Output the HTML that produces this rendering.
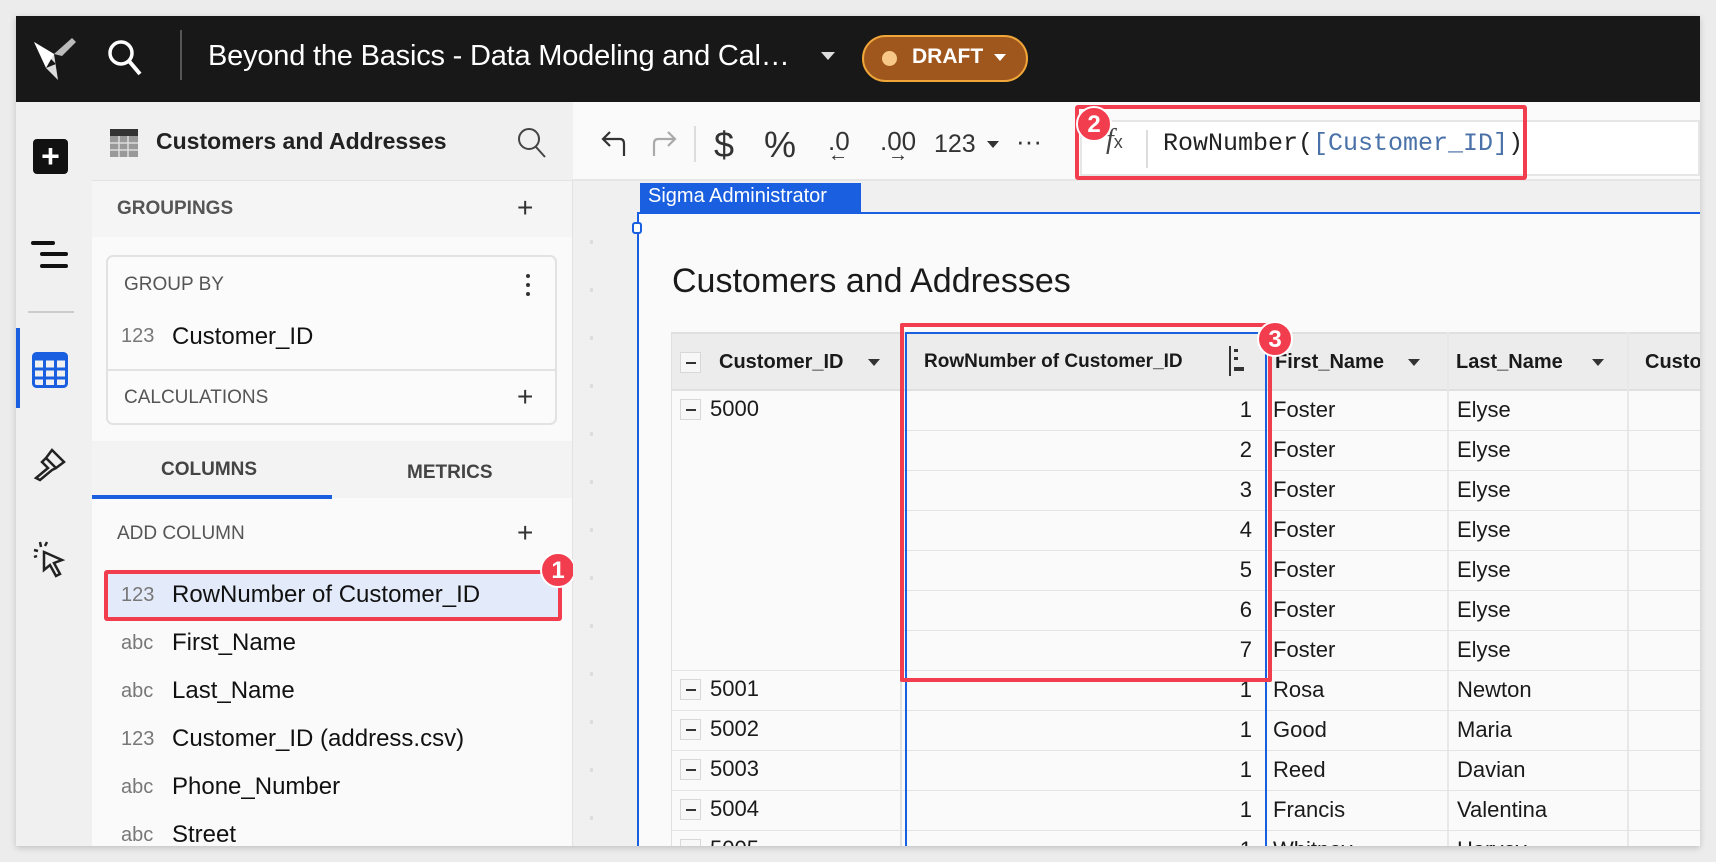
<!DOCTYPE html>
<html><head><meta charset="utf-8">
<style>
*{box-sizing:border-box;margin:0;padding:0}
body{width:1716px;height:862px;background:#ececec;font-family:"Liberation Sans",sans-serif;position:relative;overflow:hidden;color:#1a1a1a}
.a{position:absolute}
.frame{left:16px;top:16px;width:1684px;height:830px;background:#fafafa;box-shadow:0 2px 6px rgba(0,0,0,.18);overflow:hidden}
.top{left:0;top:0;width:1684px;height:86px;background:#181818}
.t{white-space:nowrap}
.cell{font-size:22px;color:#1a1a1a}
.hl{height:1px;background:#e4e4e4}
.badge{width:36px;height:36px;border-radius:50%;background:#f23d4f;color:#fff;font-weight:bold;font-size:24px;text-align:center;line-height:33px;border:2px solid #fff}
.mbox{width:21px;height:21px;border:1px solid #d8d8d8;background:#f7f7f7}
.mbox:after{content:"";position:absolute;left:5px;top:9px;width:10px;height:2px;background:#333}
</style></head><body>
<div class="a frame">
 <div class="a top">
  <svg class="a" style="left:16px;top:18px" width="46" height="48" viewBox="0 0 46 48"><path d="M2 8 L22 20 L26 46 L14 34 L24 30 Z" fill="#ddd"/><path d="M22 20 L40 4 L44 8 L30 22 Z" fill="#bbb"/><path d="M2 8 L22 20 L14 34Z" fill="#fff"/></svg>
  <svg class="a" style="left:90px;top:22px" width="38" height="40" viewBox="0 0 38 40"><circle cx="15" cy="15" r="11" fill="none" stroke="#fff" stroke-width="3.5"/><path d="M23 23 L34 36" stroke="#fff" stroke-width="4"/></svg>
  <div class="a" style="left:164px;top:14px;width:2px;height:50px;background:#555"></div>
  <div class="a t" style="left:192px;top:24px;font-size:29px;color:#fff;letter-spacing:-0.2px">Beyond the Basics - Data Modeling and Cal…</div>
  <div class="a" style="left:805px;top:36px;border-left:7px solid transparent;border-right:7px solid transparent;border-top:8px solid #ddd"></div>
  <div class="a" style="left:846px;top:19px;width:166px;height:47px;border-radius:24px;background:#a0571d;border:2px solid #f0a638"></div>
  <div class="a" style="left:866px;top:35px;width:15px;height:15px;border-radius:50%;background:#f7c887"></div>
  <div class="a t" style="left:896px;top:29px;font-size:21px;font-weight:bold;color:#fff">DRAFT</div>
  <div class="a" style="left:978px;top:38px;border-left:6px solid transparent;border-right:6px solid transparent;border-top:7px solid #fff"></div>
 </div>
 <!-- rail -->
 <div class="a" style="left:0;top:86px;width:76px;height:744px;background:#f0f0f0"></div>
 <div class="a" style="left:17px;top:123px;width:35px;height:35px;background:#111;border-radius:4px;color:#fff;font-size:32px;font-weight:bold;text-align:center;line-height:34px">+</div>
 <div class="a" style="left:15px;top:225px;width:24px;height:4px;background:#111;border-radius:2px"></div>
 <div class="a" style="left:24px;top:236px;width:28px;height:4px;background:#111;border-radius:2px"></div>
 <div class="a" style="left:24px;top:248px;width:28px;height:4px;background:#111;border-radius:2px"></div>
 <div class="a" style="left:12px;top:295px;width:46px;height:2px;background:#ccc"></div>
 <div class="a" style="left:0;top:312px;width:4px;height:80px;background:#1a5fe0"></div>
 <svg class="a" style="left:16px;top:336px" width="36" height="36" viewBox="0 0 36 36"><rect x="1.5" y="1.5" width="33" height="33" rx="3" fill="none" stroke="#1a5fe0" stroke-width="3"/><rect x="1.5" y="1.5" width="33" height="7" fill="#1a5fe0"/><path d="M1.5 17H34.5M1.5 26H34.5M12.5 8V34M23.5 8V34" stroke="#1a5fe0" stroke-width="3"/></svg>
 <svg class="a" style="left:16px;top:430px" width="36" height="36" viewBox="0 0 36 36" fill="none" stroke="#222" stroke-width="2.5"><path d="M20 4 L32 16 L24 22 L14 12 Z"/><path d="M14 12 L10 16 L16 22 L4 32 L8 34 L20 24 L24 22"/></svg>
 <svg class="a" style="left:16px;top:524px" width="38" height="40" viewBox="0 0 38 40" fill="none" stroke="#222" stroke-width="2.5"><path d="M12 12 L30 20 L22 23 L28 34 L24 36 L18 25 L12 30 Z"/><path d="M8 2 L9 7M2 10 L6 11M15 2 L13 6M2 17 L5 16"/></svg>
 <!-- panel -->
 <div class="a" style="left:76px;top:86px;width:481px;height:744px;background:#fafafa;border-right:1px solid #e2e2e2"></div>
 <div class="a" style="left:76px;top:86px;width:481px;height:79px;background:#f0f0f0;border-bottom:1px solid #e2e2e2"></div>
 <svg class="a" style="left:94px;top:113px" width="28" height="28" viewBox="0 0 28 28"><rect width="28" height="28" fill="#999"/><rect width="28" height="7" fill="#333"/><path d="M0 14H28M0 21H28M9 7V28M18 7V28" stroke="#ddd" stroke-width="1.5"/></svg>
 <div class="a t" style="left:140px;top:112px;font-size:23px;font-weight:bold;color:#222">Customers and Addresses</div>
 <svg class="a" style="left:500px;top:110px" width="32" height="34" viewBox="0 0 32 34" fill="none" stroke="#444" stroke-width="2"><circle cx="13" cy="13" r="10"/><path d="M20 21 L29 31"/></svg>
 <div class="a" style="left:76px;top:165px;width:480px;height:56px;background:#f5f5f5"></div>
 <div class="a t" style="left:101px;top:182px;font-size:19px;font-weight:bold;color:#555">GROUPINGS</div>
 <div class="a t" style="left:501px;top:176px;font-size:28px;color:#333">+</div>
 <div class="a" style="left:90px;top:239px;width:451px;height:170px;background:#fbfbfb;border:2px solid #e2e2e2;border-radius:7px"></div>
 <div class="a" style="left:92px;top:353px;width:447px;height:2px;background:#e2e2e2"></div>
 <div class="a t" style="left:108px;top:258px;font-size:19px;color:#555">GROUP BY</div>
 <div class="a" style="left:510px;top:258px;width:4px;height:4px;border-radius:2px;background:#333;box-shadow:0 9px 0 #333,0 18px 0 #333"></div>
 <div class="a t" style="left:105px;top:309px;font-size:20px;color:#777">123</div>
 <div class="a t" style="left:156px;top:307px;font-size:24px;color:#111">Customer_ID</div>
 <div class="a t" style="left:108px;top:371px;font-size:19px;color:#555">CALCULATIONS</div>
 <div class="a t" style="left:501px;top:365px;font-size:28px;color:#333">+</div>
 <div class="a" style="left:76px;top:425px;width:480px;height:57px;background:#f3f3f3"></div>
 <div class="a t" style="left:145px;top:443px;font-size:19px;font-weight:bold;color:#444">COLUMNS</div>
 <div class="a t" style="left:391px;top:446px;font-size:19px;font-weight:bold;color:#444">METRICS</div>
 <div class="a" style="left:76px;top:479px;width:240px;height:4px;background:#1a5fe0"></div>
 <div class="a t" style="left:101px;top:507px;font-size:19px;color:#555">ADD COLUMN</div>
 <div class="a t" style="left:501px;top:501px;font-size:28px;color:#333">+</div>
 <div class="a" style="left:88px;top:554px;width:458px;height:51px;background:#e3ebfb;border:4px solid #f23d4f;border-radius:3px"></div>
 <div class="a badge" style="left:524px;top:536px">1</div>
 <div class="a t" style="left:105px;top:568px;font-size:20px;color:#777">123</div>
 <div class="a t" style="left:156px;top:565px;font-size:24px;color:#111">RowNumber of Customer_ID</div>
 <div class="a t" style="left:105px;top:616px;font-size:20px;color:#777">abc</div>
 <div class="a t" style="left:156px;top:613px;font-size:24px;color:#111">First_Name</div>
 <div class="a t" style="left:105px;top:664px;font-size:20px;color:#777">abc</div>
 <div class="a t" style="left:156px;top:661px;font-size:24px;color:#111">Last_Name</div>
 <div class="a t" style="left:105px;top:712px;font-size:20px;color:#777">123</div>
 <div class="a t" style="left:156px;top:709px;font-size:24px;color:#111">Customer_ID (address.csv)</div>
 <div class="a t" style="left:105px;top:760px;font-size:20px;color:#777">abc</div>
 <div class="a t" style="left:156px;top:757px;font-size:24px;color:#111">Phone_Number</div>
 <div class="a t" style="left:105px;top:808px;font-size:20px;color:#777">abc</div>
 <div class="a t" style="left:156px;top:805px;font-size:24px;color:#111">Street</div>
 <!-- toolbar -->
 <div class="a" style="left:557px;top:86px;width:1127px;height:79px;background:#fafafa;border-bottom:2px solid #e6e6e6"></div>
 <svg class="a" style="left:584px;top:112px" width="30" height="30" viewBox="0 0 30 30" fill="none" stroke="#333" stroke-width="2.2"><path d="M10 4 L3 11 L10 18"/><path d="M3 11 H20 Q24 11 24 16 V28"/></svg>
 <svg class="a" style="left:632px;top:112px" width="30" height="30" viewBox="0 0 30 30" fill="none" stroke="#aaa" stroke-width="2.2"><path d="M20 4 L27 11 L20 18"/><path d="M27 11 H10 Q6 11 6 16 V28"/></svg>
 <div class="a" style="left:678px;top:110px;width:2px;height:36px;background:#ddd"></div>
 <div class="a t" style="left:698px;top:108px;font-size:36px;color:#333">$</div>
 <div class="a t" style="left:748px;top:108px;font-size:36px;color:#333">%</div>
 <div class="a t" style="left:812px;top:110px;font-size:26px;color:#333">.0</div>
 <div class="a t" style="left:812px;top:128px;font-size:20px;color:#333">←</div>
 <div class="a t" style="left:864px;top:110px;font-size:26px;color:#333">.00</div>
 <div class="a t" style="left:872px;top:128px;font-size:20px;color:#333">→</div>
 <div class="a t" style="left:918px;top:114px;font-size:25px;color:#333">123</div>
 <div class="a" style="left:971px;top:125px;border-left:6px solid transparent;border-right:6px solid transparent;border-top:7px solid #333"></div>
 <div class="a t" style="left:1000px;top:110px;font-size:26px;color:#333">···</div>
 <div class="a" style="left:1064px;top:104px;width:620px;height:56px;background:#fff;border:2px solid #e6e6e6"></div>
 <div class="a t" style="left:1090px;top:108px;font-size:28px;font-family:'Liberation Serif',serif;font-style:italic;color:#444">f<span style="font-size:18px;font-style:normal;font-family:'Liberation Sans'">x</span></div>
 <div class="a" style="left:1130px;top:114px;width:2px;height:38px;background:#ddd"></div>
 <div class="a t" style="left:1147px;top:113px;font-size:25px;font-family:'Liberation Mono',monospace;color:#222">RowNumber(<span style="color:#4a72a8">[Customer_ID]</span>)</div>
 <div class="a" style="left:1059px;top:89px;width:452px;height:75px;border:4px solid #f23d4f;border-radius:3px"></div>
 <div class="a badge" style="left:1060px;top:90px">2</div>
 <!-- canvas -->
 <div class="a" style="left:557px;top:165px;width:1127px;height:665px;background:#f0f0f0"></div>
 <div class="a" style="left:574px;top:180px;width:3px;height:650px;background:repeating-linear-gradient(#f0f0f0 0 44px,#ddd 44px 48px)"></div>
 <div class="a" style="left:621px;top:196px;width:1063px;height:634px;background:#fafafa;border-left:2px solid #1a5fe0;border-top:2px solid #1a5fe0"></div>
 <div class="a t" style="left:624px;top:167px;width:221px;height:29px;background:#1a5fe0;color:#fff;font-size:20px;padding:2px 0 0 8px">Sigma Administrator</div>
 <div class="a" style="left:616px;top:206px;width:10px;height:12px;border:2px solid #1a5fe0;background:#fff;border-radius:3px"></div>
 <div class="a t" style="left:656px;top:246px;font-size:34px;color:#1a1a1a">Customers and Addresses</div>
 <!-- table -->
 <div class="a" style="left:655px;top:316px;width:1029px;height:59px;background:#ececec;border-top:2px solid #e0e0e0;border-bottom:2px solid #e0e0e0"></div>
 <div class="a" style="left:655px;top:316px;width:1px;height:514px;background:#e0e0e0"></div>
 <div class="a" style="left:884px;top:316px;width:2px;height:514px;background:#e0e0e0"></div>
 <div class="a" style="left:1431px;top:316px;width:2px;height:514px;background:#e8e8e8"></div>
 <div class="a" style="left:1611px;top:316px;width:2px;height:514px;background:#e8e8e8"></div>
 <div class="a mbox" style="left:664px;top:336px"></div>
 <div class="a t" style="left:703px;top:335px;font-size:20px;font-weight:bold">Customer_ID</div>
 <div class="a" style="left:852px;top:343px;border-left:6px solid transparent;border-right:6px solid transparent;border-top:7px solid #333"></div>
 <div class="a t" style="left:908px;top:335px;font-size:19px;font-weight:bold">RowNumber of Customer_ID</div>
 <div class="a" style="left:1213px;top:330px;width:2px;height:30px;background:#333"></div>
 <div class="a" style="left:1218px;top:333px;width:4px;height:3px;background:#333;box-shadow:0 8px 0 #333"></div>
 <div class="a" style="left:1218px;top:351px;width:10px;height:4px;background:#333"></div>
 <div class="a t" style="left:1259px;top:335px;font-size:20px;font-weight:bold">First_Name</div>
 <div class="a" style="left:1392px;top:343px;border-left:6px solid transparent;border-right:6px solid transparent;border-top:7px solid #333"></div>
 <div class="a t" style="left:1440px;top:335px;font-size:20px;font-weight:bold">Last_Name</div>
 <div class="a" style="left:1576px;top:343px;border-left:6px solid transparent;border-right:6px solid transparent;border-top:7px solid #333"></div>
 <div class="a t" style="left:1629px;top:335px;font-size:20px;font-weight:bold">Custo</div>
 <!-- row lines -->
 <div class="a hl" style="left:886px;top:414px;width:798px"></div>
 <div class="a hl" style="left:886px;top:454px;width:798px"></div>
 <div class="a hl" style="left:886px;top:494px;width:798px"></div>
 <div class="a hl" style="left:886px;top:534px;width:798px"></div>
 <div class="a hl" style="left:886px;top:574px;width:798px"></div>
 <div class="a hl" style="left:886px;top:614px;width:798px"></div>
 <div class="a hl" style="left:655px;top:654px;width:1029px"></div>
 <div class="a hl" style="left:655px;top:694px;width:1029px"></div>
 <div class="a hl" style="left:655px;top:734px;width:1029px"></div>
 <div class="a hl" style="left:655px;top:774px;width:1029px"></div>
 <div class="a hl" style="left:655px;top:814px;width:1029px"></div>
 <div class="a mbox" style="left:664px;top:383px"></div><div class="a t cell" style="left:694px;top:380px">5000</div>
 <div class="a mbox" style="left:664px;top:663px"></div><div class="a t cell" style="left:694px;top:660px">5001</div>
 <div class="a mbox" style="left:664px;top:703px"></div><div class="a t cell" style="left:694px;top:700px">5002</div>
 <div class="a mbox" style="left:664px;top:743px"></div><div class="a t cell" style="left:694px;top:740px">5003</div>
 <div class="a mbox" style="left:664px;top:783px"></div><div class="a t cell" style="left:694px;top:780px">5004</div>
 <div class="a mbox" style="left:664px;top:823px"></div><div class="a t cell" style="left:694px;top:820px">5005</div>
 <div class="a cell" style="left:1180px;top:374px;width:56px;text-align:right;line-height:40px">1<br>2<br>3<br>4<br>5<br>6<br>7<br>1<br>1<br>1<br>1<br>1</div>
 <div class="a cell" style="left:1257px;top:374px;line-height:40px">Foster<br>Foster<br>Foster<br>Foster<br>Foster<br>Foster<br>Foster<br>Rosa<br>Good<br>Reed<br>Francis<br>Whitney</div>
 <div class="a cell" style="left:1441px;top:374px;line-height:40px">Elyse<br>Elyse<br>Elyse<br>Elyse<br>Elyse<br>Elyse<br>Elyse<br>Newton<br>Maria<br>Davian<br>Valentina<br>Harvey</div>
 <div class="a" style="left:889px;top:316px;width:362px;height:514px;border-left:2px solid #1a5fe0;border-right:2px solid #1a5fe0;border-top:2px solid #1a5fe0"></div>
 <div class="a" style="left:884px;top:307px;width:372px;height:359px;border:4px solid #f23d4f;border-radius:2px"></div>
 <div class="a badge" style="left:1241px;top:305px">3</div>
</div>
</body></html>
